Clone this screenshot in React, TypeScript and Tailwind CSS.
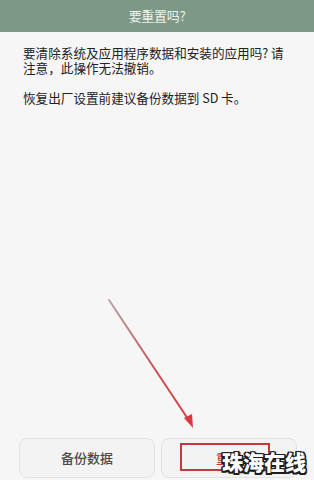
export default function App() {
  return (
    <div
      className="relative h-[480px] w-[314px] overflow-hidden bg-[#f6f6f6] flex flex-col"
      style={{ fontFamily: '"Noto Sans CJK SC", "Noto Sans", sans-serif' }}
    >
      <header className="h-[32px] bg-[#7d9886] flex items-center justify-center">
        <span className="text-[13px] text-[#eef3ee] tracking-[-0.3px]">要重置吗?</span>
      </header>

      <div className="px-[23px] pt-[13px] pr-[20px] text-[12.6px] leading-[15px] text-[#222]">
        <p>要清除系统及应用程序数据和安装的应用吗? 请注意，此操作无法撤销。</p>
        <p className="mt-[15px]">恢复出厂设置前建议备份数据到 SD 卡。</p>
      </div>

      <div className="flex-1" />

      <div className="flex gap-[6px] px-[19px] pr-[17px] pb-[2px]">
        <button className="flex-1 h-[40px] rounded-[8px] border border-[#e2e2e2] bg-[#f3f3f3] text-[13px] font-medium text-[#4a4a4a]">
          备份数据
        </button>
        <button className="flex-1 h-[40px] rounded-[8px] border border-[#e2e2e2] bg-[#f3f3f3] text-[13px] font-medium text-[#c8373a]">
          重置
        </button>
      </div>

      {/* annotation: red box round the reset button */}
      <div className="absolute left-[180px] top-[443px] w-[90px] h-[28px] border-2 border-[#c9383c]" />

      {/* annotation: arrow */}
      <svg className="absolute inset-0 pointer-events-none" width="314" height="480">
        <defs>
          <linearGradient id="arr" x1="109" y1="300" x2="193" y2="428" gradientUnits="userSpaceOnUse">
            <stop offset="0" stopColor="#b9a3a6" />
            <stop offset="0.5" stopColor="#c9565b" />
            <stop offset="1" stopColor="#d83a40" />
          </linearGradient>
        </defs>
        <line x1="109" y1="300" x2="190" y2="422" stroke="url(#arr)" strokeWidth="2" strokeLinecap="round" />
        <polygon points="193,428 184,418 192,414" fill="#d83a40" />
      </svg>

      {/* watermark */}
      <div
        className="absolute left-[222px] top-[447px] text-[21px] font-black leading-[28px] text-white"
        style={{
          textShadow:
            "1.5px 0 0 #1e1e1e, -1.5px 0 0 #1e1e1e, 0 1.5px 0 #1e1e1e, 0 -1.5px 0 #1e1e1e, 1.5px 1.5px 0 #1e1e1e, -1.5px -1.5px 0 #1e1e1e, 1.5px -1.5px 0 #1e1e1e, -1.5px 1.5px 0 #1e1e1e",
        }}
      >
        珠海在线
      </div>
    </div>
  );
}
